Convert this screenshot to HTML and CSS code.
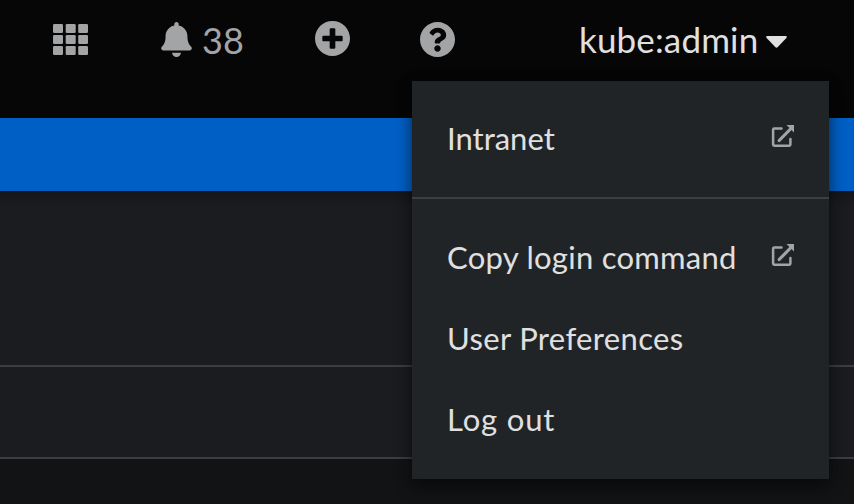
FILE: index.html
```html
<!DOCTYPE html>
<html lang="en">
<head>
<meta charset="utf-8">
<title>Console</title>
<link rel="stylesheet" href="styles.css">
</head>
<body>
<header class="masthead">
  <svg class="icon apps" viewBox="0 0 35 31"><g id="row"><rect width="10" height="9" rx="1.3"/><rect x="12.7" width="10" height="9" rx="1.3"/><rect x="25.2" width="9.8" height="9" rx="1.3"/></g><use href="#row" y="11"/><use href="#row" y="22"/></svg>
  <svg class="icon bell" viewBox="0 0 448 512"><path d="M224 512c35.32 0 63.97-28.65 63.97-64H160.03c0 35.35 28.65 64 63.97 64zm215.39-149.71c-19.32-20.76-55.47-51.99-55.47-154.29 0-77.7-54.48-139.9-127.94-155.16V32c0-17.67-14.32-32-31.98-32s-31.98 14.33-31.98 32v20.84C118.56 68.1 64.08 130.3 64.08 208c0 102.3-36.15 133.53-55.47 154.29-6 6.45-8.66 14.16-8.61 21.71.11 16.4 12.98 32 32.1 32h383.8c19.12 0 32-15.6 32.1-32 .05-7.55-2.61-15.27-8.61-21.71z"/></svg>
  <span class="count">38</span>
  <svg class="icon add" viewBox="8 8 496 496"><path d="M256 8C119 8 8 119 8 256s111 248 248 248 248-111 248-248S393 8 256 8zm144 276c0 6.6-5.4 12-12 12h-92v92c0 6.6-5.4 12-12 12h-56c-6.6 0-12-5.4-12-12v-92h-92c-6.6 0-12-5.4-12-12v-56c0-6.6 5.4-12 12-12h92v-92c0-6.6 5.4-12 12-12h56c6.6 0 12 5.4 12 12v92h92c6.6 0 12 5.4 12 12v56z"/></svg>
  <svg class="icon help" viewBox="8 8 496 496"><path d="M504 256c0 136.997-111.043 248-248 248S8 392.997 8 256C8 119.083 119.043 8 256 8s248 111.083 248 248zM262.655 90c-54.497 0-89.255 22.957-116.549 63.758-3.536 5.286-2.353 12.415 2.715 16.258l34.699 26.310c5.205 3.947 12.621 3.008 16.665-2.122 17.864-22.658 30.113-35.797 57.303-35.797 20.429 0 45.698 13.148 45.698 32.958 0 14.976-12.363 22.667-32.534 33.976C247.128 238.528 216 254.941 216 296v4c0 6.627 5.373 12 12 12h56c6.627 0 12-5.373 12-12v-1.333c0-28.462 83.186-29.647 83.186-106.667 0-58.002-60.165-102-116.531-102zM256 338c-25.365 0-46 20.635-46 46 0 25.364 20.635 46 46 46s46-20.636 46-46c0-25.365-20.635-46-46-46z"/></svg>
  <button class="user"><span class="user-name">kube:admin</span><svg class="caret" viewBox="0 0 21 12"><path d="M1.200 0H19.800Q21.500.3 20.600 1.800L11.800 11Q10.500 12.400 9.200 11L.4 1.800Q-.5.3 1.200 0Z"/></svg></button>
  <nav class="menu">
    <a class="item first"><span class="intranet">Intranet</span><svg class="ext" viewBox="0 0 22 22"><path class="frame" d="M9.500 3.600H2.300Q1.100 3.600 1.100 4.800V19.600Q1.100 20.800 2.300 20.800H17.200Q18.400 20.800 18.400 19.600V14"/><path class="shaft" d="M7.200 15.500L18.500 4"/><path class="head" d="M14.500 0H22V7.500Z"/></svg></a>
    <div class="divider"></div>
    <a class="item"><span class="copy">Copy login command</span><svg class="ext" viewBox="0 0 22 22"><path class="frame" d="M9.500 3.600H2.300Q1.100 3.600 1.100 4.800V19.600Q1.100 20.800 2.300 20.800H17.200Q18.400 20.800 18.400 19.600V14"/><path class="shaft" d="M7.200 15.500L18.500 4"/><path class="head" d="M14.500 0H22V7.500Z"/></svg></a>
    <a class="item"><span class="prefs">User Preferences</span></a>
    <a class="item"><span class="logout">Log out</span></a>
  </nav>
</header>
<div class="banner"></div>
<main>
  <section class="title"></section>
  <section class="toolbar"></section>
</main>
</body>
</html>
```
FILE: styles.css
```css
* { box-sizing: border-box; }
body {
  margin: 0;
  height: 504px;
  overflow: hidden;
  background: #121315;
  color: #e0e0e0;
  font: 31px/40px Lato, "Liberation Sans", sans-serif;
}
.masthead {
  position: relative;
  display: flex;
  align-items: flex-start;
  height: 118px;
  padding: 21px 67px 0 53px;
  background: #060606;
}
svg { display: block; flex: none; overflow: visible; }
.icon { fill: #a3a4a6; }
.apps { width: 35px; height: 31px; margin-top: 3px; }
.bell { width: 31px; height: 35px; margin: 1px 10px 0 73px; }
.count { width: 42px; margin-top: -1px; color: #a3a4a6; font-size: 36px; }
.add { width: 35px; height: 35px; margin: 0 0 0 71px; }
.help { width: 35px; height: 35px; margin: 1px 0 0 70px; }
.user {
  display: flex;
  margin: -2px 0 0 auto;
  padding: 0;
  border: 0;
  background: none;
  color: #e0e0e0;
  font: inherit;
  font-size: 35px;
}
.user-name { width: 179px; margin-right: 8px; letter-spacing: .15px; text-align: left; white-space: nowrap; }
.caret { width: 21px; height: 12px; margin-top: 17px; fill: #e0e0e0; }
.menu {
  position: absolute;
  z-index: 1;
  top: 81px;
  left: 412px;
  width: 417px;
  height: 398px;
  background: #212427;
  box-shadow: 0 8px 16px rgba(3, 3, 3, .4), 0 0 12px rgba(3, 3, 3, .25);
}
.item {
  display: flex;
  justify-content: space-between;
  height: 81px;
  padding: 19px 35px 0;
  white-space: nowrap;
}
.first { height: 116px; padding-top: 37px; }
.divider { height: 2px; margin-bottom: 19px; background: #3c3f42; }
.copy { letter-spacing: .27px; }
.prefs { letter-spacing: .35px; }
.logout { letter-spacing: .85px; }
.ext { width: 22px; height: 22px; margin-top: 7px; fill: none; }
.frame, .shaft { stroke: #a3a4a6; stroke-width: 2.500; stroke-linecap: round; }
.shaft { stroke-width: 3.200; }
.head { fill: #a3a4a6; }
.banner { height: 73px; background: #005fc5; }
.title {
  height: 176px;
  border-bottom: 2px solid #3c3d40;
  background: linear-gradient(#151617, #1b1c20 16px);
}
.toolbar { height: 92px; border-bottom: 2px solid #3c3d40; background: #1b1c20; }
```
